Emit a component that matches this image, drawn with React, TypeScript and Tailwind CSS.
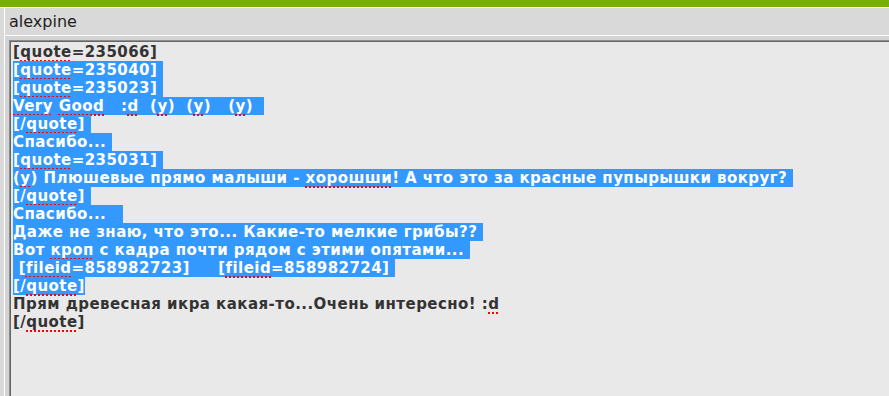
import React from "react";

type Seg = { t: string; u?: boolean };

const sp = (t: string): Seg => ({ t, u: true });
const n = (t: string): Seg => ({ t });

type Line = { segs: Seg[]; sel: boolean; tail?: string };

const lines: Line[] = [
  { segs: [n("["), sp("quote"), n("=235066]")], sel: false },
  { segs: [n("["), sp("quote"), n("=235040]")], sel: true, tail: " " },
  { segs: [n("["), sp("quote"), n("=235023]")], sel: true, tail: " " },
  { segs: [sp("Very"), n(" "), sp("Good"), n("   :"), sp("d"), n("  ("), sp("y"), n(")  ("), sp("y"), n(")   ("), sp("y"), n(")")], sel: true, tail: "  " },
  { segs: [n("[/"), sp("quote"), n("]")], sel: true, tail: " " },
  { segs: [n("Спасибо...")], sel: true, tail: " " },
  { segs: [n("["), sp("quote"), n("=235031]")], sel: true, tail: " " },
  { segs: [n("("), sp("y"), n(") Плюшевые прямо малыши - "), sp("хорошши"), n("! А что это за красные пупырышки вокруг?")], sel: true, tail: " " },
  { segs: [n("[/"), sp("quote"), n("]")], sel: true, tail: " " },
  { segs: [n("Спасибо...  ")], sel: true, tail: " " },
  { segs: [n("Даже не знаю, что это... Какие-то мелкие грибы??")], sel: true, tail: " " },
  { segs: [n("Вот "), sp("кроп"), n(" с кадра почти рядом с этими опятами...")], sel: true, tail: " " },
  { segs: [n(" ["), sp("fileid"), n("=858982723]     ["), sp("fileid"), n("=858982724]")], sel: true, tail: " " },
  { segs: [n("[/"), sp("quote"), n("]")], sel: true },
  { segs: [n("Прям древесная икра какая-то...Очень интересно! :"), sp("d")], sel: false },
  { segs: [n("[/"), sp("quote"), n("]")], sel: false },
];

function Row({ line }: { line: Line }) {
  const content = line.segs.map((s, i) =>
    s.u ? (
      <span
        key={i}
        className="underline decoration-dotted decoration-[#ff0000] decoration-2 underline-offset-[3px]"
      >
        {s.t}
      </span>
    ) : (
      <span key={i}>{s.t}</span>
    )
  );
  return (
    <div className="h-[18px] leading-[18px] whitespace-pre">
      {line.sel ? (
        <span className="inline-block h-[18px] bg-[#3399ff] text-white">
          {content}
          {line.tail}
        </span>
      ) : (
        <span>{content}</span>
      )}
    </div>
  );
}

export default function App() {
  return (
    <div className="w-[889px] h-[396px] overflow-hidden bg-[#d9d9d9]">
      <div className="h-[7px] bg-[#77b000]" />
      <div className="h-px bg-white" />
      <div className="pl-[4px] h-[388px]">
        <div className="border-l border-white h-full flex flex-col">
          <div
            className="h-[27px] pl-[4px] flex items-center text-[16px] text-[#1e1e1e]"
            style={{ fontFamily: '"DejaVu Sans", sans-serif' }}
          >
            alexpine
          </div>
          <div className="h-px bg-white" />
          <div className="flex-1 pt-[4px] pl-[4px] bg-[#d3d3d3]">
            <div className="h-full border-t border-l border-[#8c8c8c]">
              <div
                className="h-full border-t border-l border-[#666666] bg-[#e9e9e9] pl-[2px] pt-px text-[15px] tracking-[0.45px] font-bold text-[#333333]"
                style={{ fontFamily: '"DejaVu Sans", sans-serif' }}
              >
                {lines.map((l, i) => (
                  <Row key={i} line={l} />
                ))}
              </div>
            </div>
          </div>
        </div>
      </div>
    </div>
  );
}
